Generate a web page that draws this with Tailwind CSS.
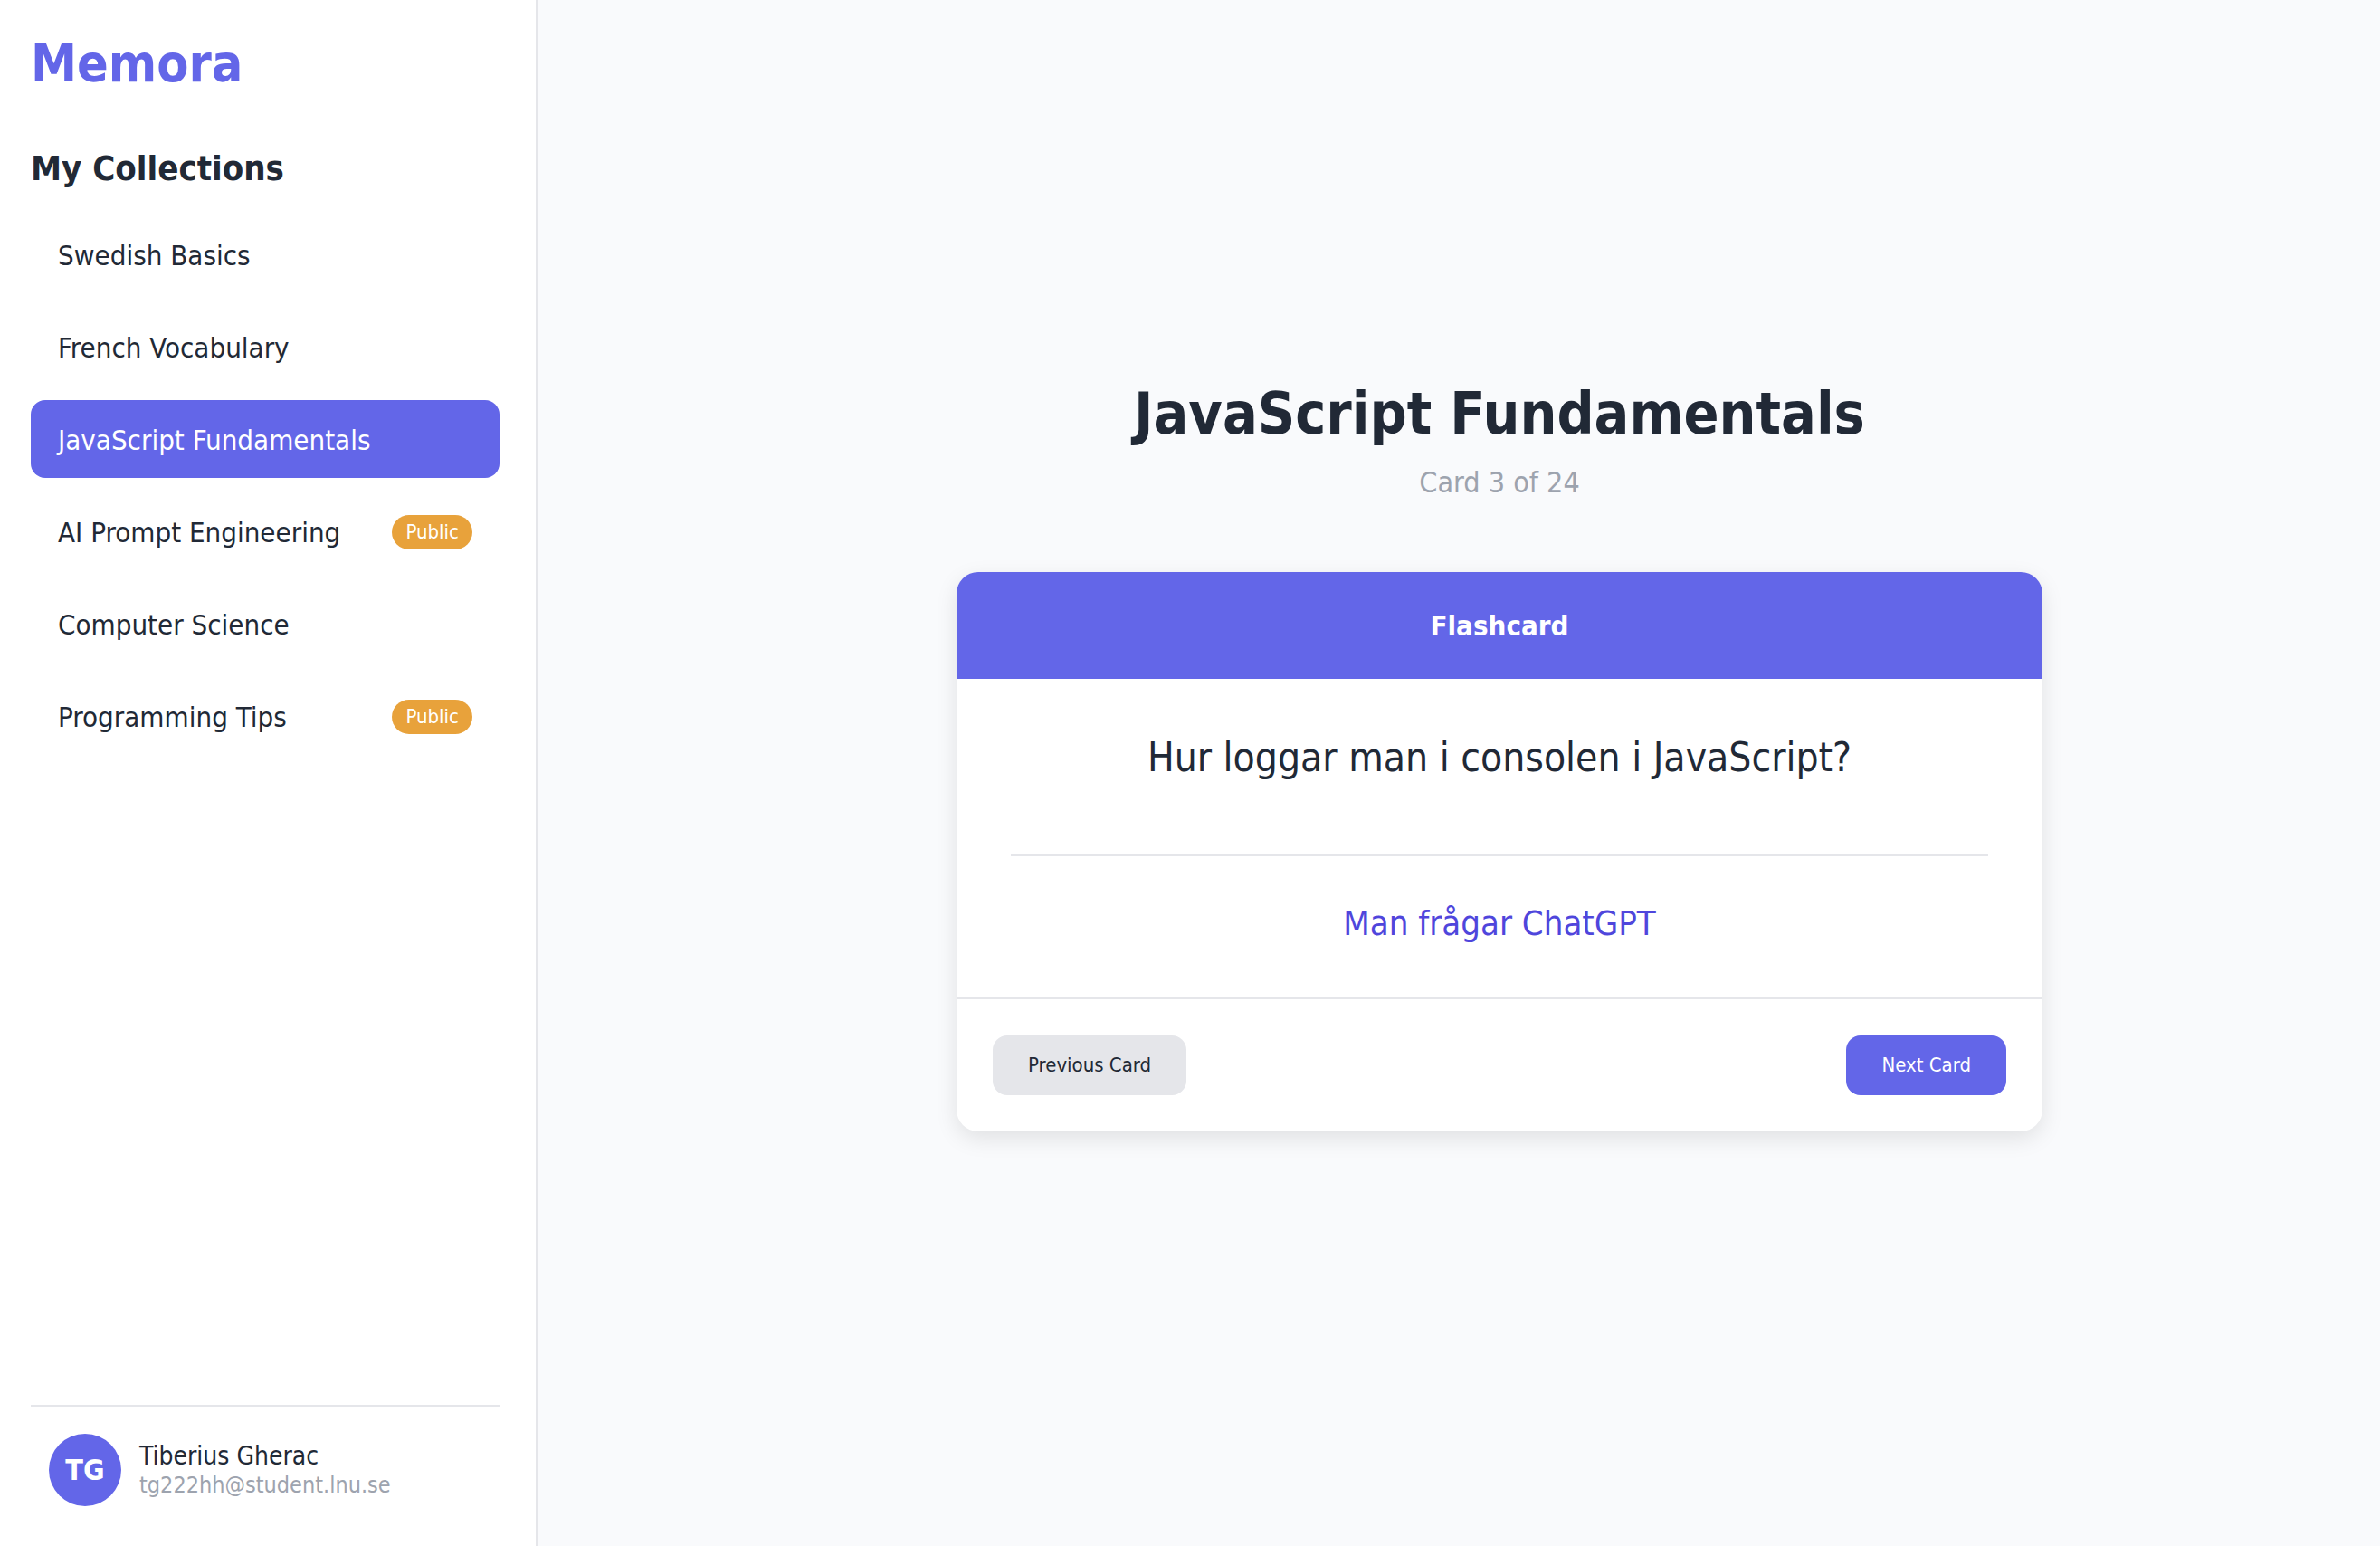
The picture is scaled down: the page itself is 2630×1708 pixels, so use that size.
<!DOCTYPE html>
<html lang="en">
<head>
<meta charset="utf-8">
<meta name="viewport" content="width=device-width, initial-scale=1">
<title>Memora</title>
<script src="https://cdn.jsdelivr.net/npm/@tailwindcss/browser@4"></script>
</head>
<body class="flex min-h-screen bg-[#f9fafc] font-['DejaVu_Sans_Condensed','DejaVu_Sans',sans-serif] text-[32px] leading-[38px] text-[#212936]">
  <aside class="flex w-[594px] shrink-0 flex-col border-r-2 border-[#e5e6ea] bg-white pt-10 pr-10 pb-11 pl-[34px]">
    <h1 class="text-[57px] leading-[60px] font-bold text-[#6366e8]">Memora</h1>
    <h2 class="mt-[62px] text-[38px] leading-[48px] font-bold">My Collections</h2>
    <nav class="mt-7 text-[31px]">
      <ul class="flex flex-col gap-4">
        <li><a href="#" class="flex items-center justify-between rounded-2xl px-[30px] pt-[25px] pb-[23px]">Swedish Basics</a></li>
        <li><a href="#" class="flex items-center justify-between rounded-2xl px-[30px] pt-[25px] pb-[23px]">French Vocabulary</a></li>
        <li><a href="#" aria-current="page" class="flex items-center justify-between rounded-2xl bg-[#6366e8] px-[30px] pt-[25px] pb-[23px] text-white">JavaScript Fundamentals</a></li>
        <li><a href="#" class="flex items-center justify-between rounded-2xl px-[30px] pt-[25px] pb-[23px]">AI Prompt Engineering <span class="rounded-[20px] bg-[#e8a23b] px-[15px] text-[22px] text-white">Public</span></a></li>
        <li><a href="#" class="flex items-center justify-between rounded-2xl px-[30px] pt-[25px] pb-[23px]">Computer Science</a></li>
        <li><a href="#" class="flex items-center justify-between rounded-2xl px-[30px] pt-[25px] pb-[23px]">Programming Tips <span class="rounded-[20px] bg-[#e8a23b] px-[15px] text-[22px] text-white">Public</span></a></li>
      </ul>
    </nav>
    <div class="mt-auto flex items-center gap-5 border-t-2 border-[#e5e6ea] pt-[30px] pl-5">
      <div class="flex size-20 items-center justify-center rounded-full bg-[#6366e8] font-bold text-white">TG</div>
      <div>
        <p class="text-[28px] leading-[34px]">Tiberius Gherac</p>
        <p class="text-[25px] leading-[30px] text-[#9da3ae]">tg222hh@student.lnu.se</p>
      </div>
    </div>
  </aside>
  <main class="flex flex-1 flex-col items-center justify-center pb-10 pl-[90px]">
    <h2 class="text-[64px] leading-[78px] font-bold">JavaScript Fundamentals</h2>
    <p class="mt-[18px] text-[#9da3ae]">Card 3 of 24</p>
    <section class="mt-20 w-full max-w-[1200px] overflow-hidden rounded-3xl bg-white text-center shadow-[0_8px_24px_rgba(0,0,0,0.1)]">
      <h3 class="bg-[#6366e8] py-10 text-[31px] font-bold text-white">Flashcard</h3>
      <div class="px-[60px] pt-[60px] pb-[58px]">
        <p class="border-b-2 border-[#e5e6ea] pb-20 text-[44px] leading-[54px]">Hur loggar man i consolen i JavaScript?</p>
        <p class="mt-[50px] text-[38px] leading-[48px] text-[#4f46dc]">Man frågar ChatGPT</p>
      </div>
      <div class="flex justify-between border-t-2 border-[#e5e6ea] p-10">
        <button type="button" class="rounded-2xl bg-[#e5e6ea] px-[39px] py-4 text-[22px] leading-[34px]">Previous Card</button>
        <button type="button" class="rounded-2xl bg-[#6366e8] px-[39px] py-4 text-[22px] leading-[34px] text-white">Next Card</button>
      </div>
    </section>
  </main>
</body>
</html>
